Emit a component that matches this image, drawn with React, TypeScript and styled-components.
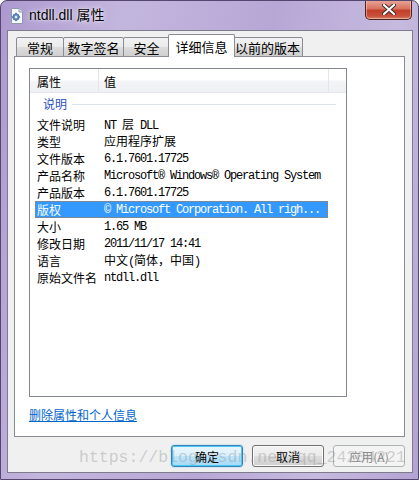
import styled, { createGlobalStyle } from "styled-components";

const GlobalStyle = createGlobalStyle`
  html, body {
    margin: 0;
    padding: 0;
    background: #ffffff;
  }
  body {
    font-family: "Noto Sans CJK SC", "Liberation Sans", sans-serif;
    font-size: 12px;
  }
`;

const Window = styled.div`
  position: relative;
  width: 419px;
  height: 480px;
  box-sizing: border-box;
  display: flex;
  flex-direction: column;
  border: 1px solid #54466e;
  border-radius: 7px 7px 0 0;
  overflow: hidden;
  background: linear-gradient(
    100deg,
    #ad99cf 0%,
    #c3b6de 25%,
    #b7a7d6 55%,
    #c6badf 80%,
    #b3a2d3 100%
  );
`;

const TitleBar = styled.div`
  height: 29px;
  display: flex;
  align-items: flex-start;
  padding-left: 9px;
  padding-right: 6px;
  box-sizing: border-box;
`;

const TitleIcon = styled.svg`
  width: 14px;
  height: 16px;
  margin-top: 7px;
  flex-shrink: 0;
`;

const TitleText = styled.div`
  margin-left: 5px;
  margin-top: 6px;
  font-family: "Liberation Sans", "Noto Sans CJK SC", sans-serif;
  font-size: 14px;
  line-height: 17px;
  color: #000;
  text-shadow: 0 0 6px rgba(255, 255, 255, 0.9), 0 0 2px rgba(255, 255, 255, 0.8);
  flex: 1;
`;

const CloseButton = styled.div`
  width: 47px;
  height: 20px;
  margin-top: -1px;
  box-sizing: border-box;
  border: 1px solid #4b2520;
  border-top: none;
  border-radius: 0 0 5px 5px;
  background: linear-gradient(180deg, #e8a99c 0%, #d9735f 45%, #c3402a 55%, #c8503a 85%, #d98a70 100%);
  box-shadow: inset 0 0 0 1px rgba(255, 210, 200, 0.5);
  display: flex;
  align-items: center;
  justify-content: center;
`;

const Client = styled.div`
  flex: 1;
  margin: 0 5px 6px 6px;
  box-sizing: border-box;
  border: 1px solid #7d7b8c;
  background: #f0f0f0;
  display: flex;
  flex-direction: column;
`;

const TabRow = styled.div`
  display: flex;
  align-items: flex-end;
  height: 23px;
  margin-top: 3px;
  padding-left: 8px;
  position: relative;
  z-index: 1;
`;

const Tab = styled.div<{ $w: number; $active?: boolean }>`
  width: ${(p) => p.$w}px;
  height: ${(p) => (p.$active ? 23 : 20)}px;
  box-sizing: border-box;
  margin-left: ${(p) => (p.$active ? -2 : -1)}px;
  margin-right: ${(p) => (p.$active ? -2 : 0)}px;
  border: 1px solid #898c95;
  border-bottom: ${(p) => (p.$active ? "none" : "1px solid #898c95")};
  border-radius: 2px 2px 0 0;
  background: ${(p) =>
    p.$active ? "#ffffff" : "linear-gradient(180deg, #f2f2f2 0%, #ebebeb 50%, #dddddd 50%, #cfcfcf 100%)"};
  position: relative;
  z-index: ${(p) => (p.$active ? 2 : 1)};
  display: flex;
  align-items: center;
  justify-content: center;
  padding-top: ${(p) => (p.$active ? 0 : 1)}px;
  font-size: 13px;
  color: #000;
  &:first-child {
    margin-left: 0;
  }
`;

const Panel = styled.div`
  margin: -1px 7px 0 6px;
  height: 381px;
  box-sizing: border-box;
  border: 1px solid #898c95;
  background: #ffffff;
  padding: 11px 14px;
  display: flex;
  flex-direction: column;
`;

const ListBox = styled.div`
  width: 318px;
  height: 329px;
  box-sizing: border-box;
  border: 1px solid #828790;
  background: #ffffff;
  display: flex;
  flex-direction: column;
`;

const Header = styled.div`
  display: flex;
  height: 24px;
  box-sizing: border-box;
  border-bottom: 1px solid #e2e5ea;
  background: linear-gradient(180deg, #ffffff 0%, #ffffff 45%, #f3f4f6 55%, #eef0f3 100%);
`;

const HeaderCell = styled.div<{ $w: number; $pad: number }>`
  width: ${(p) => p.$w}px;
  flex: none;
  box-sizing: border-box;
  padding-left: ${(p) => p.$pad}px;
  padding-top: 2px;
  border-right: 1px solid #e3e5e8;
  display: flex;
  align-items: center;
  font-size: 12px;
  color: #000;
`;

const GroupRow = styled.div`
  height: 21px;
  margin-bottom: 2px;
  display: flex;
  align-items: center;
  padding-left: 13px;
  padding-right: 10px;
  gap: 5px;
  color: #2a4fbf;
  font-size: 12px;
`;

const GroupLine = styled.div`
  flex: 1;
  height: 1px;
  background: #dbe3ea;
  margin-top: 1px;
`;

const Row = styled.div<{ $selected?: boolean }>`
  width: 293px;
  height: 17px;
  margin-left: 5px;
  box-sizing: border-box;
  display: flex;
  align-items: center;
  background: ${(p) => (p.$selected ? "#3399ff" : "transparent")};
  border: 1px ${(p) => (p.$selected ? "dotted #c27a3a" : "solid transparent")};
  color: ${(p) => (p.$selected ? "#ffffff" : "#000000")};
`;

const Label = styled.div`
  width: 68px;
  padding-left: 1px;
  box-sizing: border-box;
  flex-shrink: 0;
  font-size: 12px;
  line-height: 15px;
  white-space: nowrap;
`;

const Value = styled.div`
  font-family: "Liberation Mono", "Noto Sans CJK SC", monospace;
  font-size: 12px;
  letter-spacing: -1.2px;
  line-height: 15px;
  padding-top: 1px;
  white-space: nowrap;
`;

const Cjk = styled.span`
  font-family: "Noto Sans CJK SC", sans-serif;
  letter-spacing: 0;
`;

const Link = styled.a`
  margin-top: 11px;
  font-size: 12px;
  line-height: 14px;
  color: #0066cc;
  text-decoration: underline;
  align-self: flex-start;
  cursor: pointer;
`;

const ButtonRow = styled.div`
  display: flex;
  justify-content: flex-end;
  gap: 9px;
  padding-right: 7px;
  margin-top: 8px;
`;

const Button = styled.div<{ $variant?: "default" | "normal" | "disabled" }>`
  width: 72px;
  height: 22px;
  box-sizing: border-box;
  border-radius: 3px;
  display: flex;
  align-items: center;
  justify-content: center;
  font-size: 12px;
  border: 1px solid
    ${(p) => (p.$variant === "default" ? "#3c7fb1" : p.$variant === "disabled" ? "#adb2b5" : "#707070")};
  color: ${(p) => (p.$variant === "disabled" ? "#8a8a8a" : "#000")};
  background: ${(p) =>
    p.$variant === "default"
      ? "linear-gradient(180deg, #eaf6fd 0%, #d9f0fc 50%, #bee6fd 50%, #a7d9f5 100%)"
      : p.$variant === "disabled"
      ? "#f4f4f4"
      : "linear-gradient(180deg, #f2f2f2 0%, #ebebeb 50%, #dddddd 50%, #cfcfcf 100%)"};
  box-shadow: ${(p) =>
    p.$variant === "default"
      ? "inset 0 0 0 1px #48c8f8, 0 0 2px #8fd3f5"
      : p.$variant === "disabled"
      ? "none"
      : "inset 0 0 0 1px #fcfcfc"};
`;

const Watermark = styled.div`
  position: absolute;
  left: 78px;
  top: 447px;
  font-family: "Liberation Mono", monospace;
  font-size: 16.5px;
  color: rgba(140, 140, 140, 0.38);
  white-space: nowrap;
  pointer-events: none;
`;

const rows: { label: string; value: string; selected?: boolean }[] = [
  { label: "文件说明", value: "NT 层 DLL" },
  { label: "类型", value: "应用程序扩展" },
  { label: "文件版本", value: "6.1.7601.17725" },
  { label: "产品名称", value: "Microsoft® Windows® Operating System" },
  { label: "产品版本", value: "6.1.7601.17725" },
  { label: "版权", value: "© Microsoft Corporation. All righ...", selected: true },
  { label: "大小", value: "1.65 MB" },
  { label: "修改日期", value: "2011/11/17 14:41" },
  { label: "语言", value: "中文(简体，中国)" },
  { label: "原始文件名", value: "ntdll.dll" },
];

const CJK = /([\u3000-\u9fff\uff00-\uffef]+)/;

function renderValue(text: string) {
  return text.split(CJK).map((part, i) =>
    CJK.test(part) ? <Cjk key={i}>{part}</Cjk> : part
  );
}

function FileIcon() {
  return (
    <TitleIcon viewBox="0 0 14 16">
      <path d="M1.5 0.5 H9 L12.5 4 V15.5 H1.5 Z" fill="#fbfcfd" stroke="#8c9aae" />
      <path d="M9 0.5 V4 H12.5" fill="#dfe6ee" stroke="#8c9aae" />
      <circle cx="6" cy="9" r="3.2" fill="#6b93c4" stroke="#3d6699" strokeWidth="0.8" />
      <circle cx="6" cy="9" r="1.2" fill="#e8f0fa" />
      <path d="M6 4.8 V6 M6 12 V13.2 M1.8 9 H3 M9 9 H10.2" stroke="#3d6699" strokeWidth="1.2" />
    </TitleIcon>
  );
}

export default function App() {
  return (
    <>
      <GlobalStyle />
      <Window>
        <TitleBar>
          <FileIcon />
          <TitleText>ntdll.dll 属性</TitleText>
          <CloseButton>
            <svg width="14" height="11" viewBox="0 0 14 11">
              <path d="M2 1 L12 10 M12 1 L2 10" stroke="#3a2a2a" strokeWidth="4" strokeLinecap="round" />
              <path d="M2 1 L12 10 M12 1 L2 10" stroke="#ffffff" strokeWidth="2.2" strokeLinecap="round" />
            </svg>
          </CloseButton>
        </TitleBar>
        <Client>
          <TabRow>
            <Tab $w={48}>常规</Tab>
            <Tab $w={61}>数字签名</Tab>
            <Tab $w={47}>安全</Tab>
            <Tab $w={67} $active>
              详细信息
            </Tab>
            <Tab $w={71}>以前的版本</Tab>
          </TabRow>
          <Panel>
            <ListBox>
              <Header>
                <HeaderCell $w={69} $pad={7}>属性</HeaderCell>
                <HeaderCell $w={230} $pad={5}>值</HeaderCell>
              </Header>
              <GroupRow>
                说明
                <GroupLine />
              </GroupRow>
              {rows.map((r) => (
                <Row key={r.label} $selected={r.selected}>
                  <Label>{r.label}</Label>
                  <Value>{renderValue(r.value)}</Value>
                </Row>
              ))}
            </ListBox>
            <Link>删除属性和个人信息</Link>
          </Panel>
          <ButtonRow>
            <Button $variant="default">确定</Button>
            <Button>取消</Button>
            <Button $variant="disabled">应用(A)</Button>
          </ButtonRow>
        </Client>
        <Watermark>https://blog.csdn.net/qq_24204221</Watermark>
      </Window>
    </>
  );
}
